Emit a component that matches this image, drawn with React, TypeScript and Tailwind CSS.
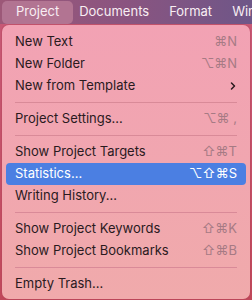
import { ChevronRight } from 'lucide-react';

type Item = { label: string; shortcut?: string; submenu?: boolean; active?: boolean } | 'sep';

const items: Item[] = [
  { label: 'New Text', shortcut: '⌘N' },
  { label: 'New Folder', shortcut: '⌥⌘N' },
  { label: 'New from Template', submenu: true },
  'sep',
  { label: 'Project Settings...', shortcut: '⌥⌘ ,' },
  'sep',
  { label: 'Show Project Targets', shortcut: '⇧⌘T' },
  { label: 'Statistics...', shortcut: '⌥⇧⌘S', active: true },
  { label: 'Writing History...' },
  'sep',
  { label: 'Show Project Keywords', shortcut: '⇧⌘K' },
  { label: 'Show Project Bookmarks', shortcut: '⇧⌘B' },
  'sep',
  { label: 'Empty Trash...' },
];

export default function App() {
  return (
    <div
      className="w-[252px] h-[300px] overflow-hidden bg-gradient-to-b from-[#c85a78] to-[#c0485a] text-[13px]"
      style={{ fontFamily: 'Inter, "DejaVu Sans", sans-serif' }}
    >
      {/* menu bar */}
      <div className="h-[24px] flex items-center bg-gradient-to-r from-[#9c5878] via-[#8a5480] to-[#6e5688] text-[#f8eef3]">
        <div className="ml-[2px] h-[23px] px-[14px] flex items-center rounded-[5px] bg-[#b27492]">Project</div>
        <div className="ml-[6px]">Documents</div>
        <div className="ml-[20px]">Format</div>
        <div className="ml-[20px]">Win</div>
      </div>

      {/* dropdown */}
      <div className="mx-[2px] mt-[1px] rounded-[7px] bg-gradient-to-b from-[#f2a2b4] to-[#f0aaab] px-[4px] pt-[6px] pb-[4px] shadow-[0_0_0_1px_rgba(180,70,90,0.35)]">
        {items.map((it, i) =>
          it === 'sep' ? (
            <div key={i} className="mx-[9px] my-[5px] h-px bg-[#d98a98]" />
          ) : (
            <div
              key={i}
              className={`h-[22px] flex items-center justify-between pl-[9px] pr-[9px] rounded-[4px] ${
                it.active ? 'bg-[#4b7fe2] text-white' : 'text-[#2a1a1e]'
              }`}
            >
              <span>{it.label}</span>
              {it.shortcut && (
                <span className={it.active ? 'text-white' : 'text-[#a67a84]'}>{it.shortcut}</span>
              )}
              {it.submenu && (
                <ChevronRight className="w-[12px] h-[12px] -mr-[2px] text-[#2a1a1e]" strokeWidth={3} />
              )}
            </div>
          )
        )}
      </div>
    </div>
  );
}
